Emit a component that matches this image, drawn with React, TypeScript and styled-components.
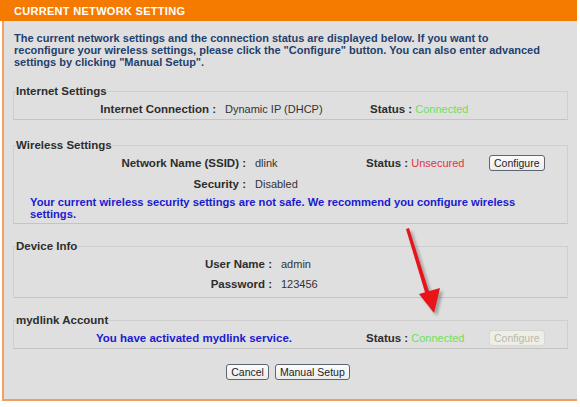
import React from "react";
import styled, { createGlobalStyle } from "styled-components";

const GlobalStyle = createGlobalStyle`
  html, body {
    margin: 0;
    padding: 0;
    background: #ffffff;
  }
  body {
    font-family: "Liberation Sans", Arial, sans-serif;
    font-size: 11px;
    color: #333333;
  }
`;

const palette = {
  orange: "#f47a00",
  panel: "#dfdfdf",
  navy: "#243f6e",
  blue: "#1a1ad0",
  green: "#6fe05a",
  red: "#e0333f",
  text: "#333333",
};

interface RowItem {
  label: string;
  value: string;
}

const deviceRows: RowItem[] = [
  { label: "User Name :", value: "admin" },
  { label: "Password :", value: "123456" },
];

const Page = () => {
  return (
    <Frame>
      <Header>CURRENT NETWORK SETTING</Header>
      <Body>
        <Intro>
          The current network settings and the connection status are displayed below. If you want to
          <br />
          reconfigure your wireless settings, please click the "Configure" button. You can also enter advanced
          <br />
          settings by clicking "Manual Setup".
        </Intro>

        <Section $gap={17}>
          <Legend>Internet Settings</Legend>
          <Row>
            <Label $width={202}>Internet Connection :</Label>
            <Value $width={154}>Dynamic IP (DHCP)</Value>
            <Status $width={120}>
              <b>Status :</b> <StateText $color={palette.green}>Connected</StateText>
            </Status>
          </Row>
        </Section>

        <Section $gap={19}>
          <Legend>Wireless Settings</Legend>
          <Row>
            <Label $width={232}>Network Name (SSID) :</Label>
            <Value $width={120}>dlink</Value>
            <Status $width={123}>
              <b>Status :</b> <StateText $color={palette.red}>Unsecured</StateText>
            </Status>
            <Button>Configure</Button>
          </Row>
          <Row $top={1}>
            <Label $width={232}>Security :</Label>
            <Value $width={114}>Disabled</Value>
          </Row>
          <Warning>
            Your current wireless security settings are not safe. We recommend you configure wireless
            settings.
          </Warning>
        </Section>

        <Section $gap={16} $bottom={3}>
          <Legend>Device Info</Legend>
          {deviceRows.map((r) => (
            <Row key={r.label}>
              <Label $width={258}>{r.label}</Label>
              <Value $width={100}>{r.value}</Value>
            </Row>
          ))}
        </Section>

        <Section $gap={16}>
          <Legend>mydlink Account</Legend>
          <Row>
            <Message>You have activated mydlink service.</Message>
            <Status $width={123}>
              <b>Status :</b> <StateText $color={palette.green}>Connected</StateText>
            </Status>
            <Button disabled>Configure</Button>
          </Row>
        </Section>

        <Actions>
          <Button>Cancel</Button>
          <Button>Manual Setup</Button>
        </Actions>
      </Body>

      <Arrow width="50" height="100" viewBox="0 0 50 100">
        <defs>
          <filter id="shadow" x="-50%" y="-50%" width="200%" height="200%">
            <feGaussianBlur stdDeviation="1.5" />
          </filter>
        </defs>
        <g transform="translate(3,3)" opacity="0.45" filter="url(#shadow)">
          <polygon points="6,3 9,2 31,72 27,73" fill="#555" />
          <polygon points="19,68 40,62 34,87" fill="#555" />
        </g>
        <polygon points="6,3 9,2 31,72 27,73" fill="#e8141a" />
        <polygon points="19,68 40,62 34,87" fill="#e8141a" />
      </Arrow>
    </Frame>
  );
};

export default function App() {
  return (
    <>
      <GlobalStyle />
      <Page />
    </>
  );
}

const Frame = styled.div`
  position: relative;
  width: 577px;
  height: 401px;
`;

const Header = styled.div`
  height: 21px;
  background: ${palette.orange};
  color: #ffffff;
  font-weight: bold;
  font-size: 11px;
  line-height: 22px;
  padding-left: 14px;
  letter-spacing: 0.3px;
`;

const Body = styled.div`
  box-sizing: border-box;
  height: 380px;
  margin-left: 2px;
  background: ${palette.panel};
  border-left: 2px solid #f0a060;
  border-bottom: 2px solid #f0a060;
  padding: 11px 9px 0 9px;
  display: flex;
  flex-direction: column;
`;

const Intro = styled.p`
  margin: 0 0 0 1px;
  color: ${palette.navy};
  font-weight: bold;
  font-size: 11px;
  line-height: 12px;
  white-space: nowrap;
`;

const Section = styled.fieldset<{ $gap: number; $bottom?: number }>`
  margin: ${(p) => p.$gap}px 0 0 0;
  padding: 2px 0 ${(p) => p.$bottom ?? 0}px 0;
  width: 555px;
  box-sizing: border-box;
  border: 1px solid #cfcfcf;
  border-bottom-color: #c4c4c4;
  min-width: 0;
`;

const Legend = styled.legend`
  padding: 0;
  margin-left: 2px;
  font-weight: bold;
  font-size: 11.5px;
  line-height: 12px;
  color: #2d2d2d;
`;

const Row = styled.div<{ $top?: number }>`
  display: flex;
  align-items: center;
  height: 20px;
  margin-top: ${(p) => p.$top ?? 0}px;
`;

const Label = styled.div<{ $width: number }>`
  width: ${(p) => p.$width}px;
  text-align: right;
  font-weight: bold;
  font-size: 11.5px;
  color: #2d2d2d;
  flex-shrink: 0;
`;

const Value = styled.div<{ $width: number }>`
  width: ${(p) => p.$width}px;
  padding-left: 9px;
  box-sizing: border-box;
  color: #333333;
  flex-shrink: 0;
`;

const Status = styled.div<{ $width: number }>`
  width: ${(p) => p.$width}px;
  flex-shrink: 0;
  font-size: 11px;
  b {
    font-size: 11.5px;
    color: #2d2d2d;
  }
`;

const StateText = styled.span<{ $color: string }>`
  color: ${(p) => p.$color};
`;

const Warning = styled.div`
  color: ${palette.blue};
  font-weight: bold;
  font-size: 11.2px;
  line-height: 12px;
  padding: 2px 0 3px 16px;
  width: 500px;
`;

const Message = styled.div`
  width: 352px;
  padding-right: 74px;
  box-sizing: border-box;
  text-align: right;
  color: ${palette.blue};
  font-weight: bold;
  font-size: 11.5px;
  flex-shrink: 0;
`;

const Button = styled.button`
  font-family: "Liberation Sans", Arial, sans-serif;
  font-size: 10.5px;
  height: 16px;
  line-height: 14px;
  padding: 0 4px;
  border: 1px solid #5d6670;
  border-radius: 3px;
  background: linear-gradient(#fbfbfb, #ececec);
  color: #222222;
  cursor: pointer;
  &:disabled {
    border-color: #d8d8d0;
    background: #eeeee6;
    color: #b8b8b0;
    cursor: default;
  }
`;

const Actions = styled.div`
  display: flex;
  justify-content: center;
  gap: 6px;
  margin-top: 15px;
  padding-right: 5px;
`;

const Arrow = styled.svg`
  position: absolute;
  left: 400px;
  top: 226px;
  overflow: visible;
`;
